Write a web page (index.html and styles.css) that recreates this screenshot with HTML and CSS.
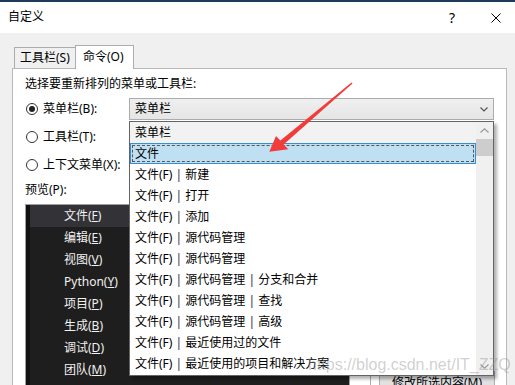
FILE: index.html
```html
<!DOCTYPE html>
<html lang="zh-CN">
<head>
  <meta charset="UTF-8">
  <title>自定义</title>
  <link rel="stylesheet" href="styles.css">
</head>
<body>

  <div class="dialog">

    <div class="titlebar">
      <span class="title">自定义</span>
      <span class="help">?</span>
      <svg class="close" width="10" height="10" viewBox="0 0 10 10">
        <path d="M0.5 0.5 L9.5 9.5 M9.5 0.5 L0.5 9.5" stroke="#000" stroke-width="1" fill="none"/>
      </svg>
    </div>

    <div class="client">
      <div class="tabs">
        <div class="tab">工具栏(S)</div>
        <div class="tab active">命令(O)</div>
      </div>

      <div class="panel">
        <div class="intro">选择要重新排列的菜单或工具栏:</div>

        <div class="choices">
          <label class="radio checked"><span class="circle"></span>菜单栏(B):</label>
          <div class="combo">
            <span>菜单栏</span>
            <svg width="8" height="5" viewBox="0 0 8 5">
              <path d="M0.5 0.5 L4 4 L7.5 0.5" stroke="#555" stroke-width="1.2" fill="none"/>
            </svg>
          </div>
          <label class="radio"><span class="circle"></span>工具栏(T):</label>
          <label class="radio"><span class="circle"></span>上下文菜单(X):</label>
        </div>

        <div class="preview-label">预览(P):</div>

        <div class="preview-row">
          <div class="preview">
            <div class="menu">
              <div class="menu-item active">文件(<u>F</u>)</div>
              <div class="menu-item">编辑(<u>E</u>)</div>
              <div class="menu-item">视图(<u>V</u>)</div>
              <div class="menu-item">Python(<u>Y</u>)</div>
              <div class="menu-item">项目(<u>P</u>)</div>
              <div class="menu-item">生成(<u>B</u>)</div>
              <div class="menu-item">调试(<u>D</u>)</div>
              <div class="menu-item">团队(<u>M</u>)</div>
            </div>
          </div>
          <div class="side">
            <div class="btn-frame">
              <div class="btn">修改所选内容(M)</div>
            </div>
          </div>
        </div>

        <!-- 打开的下拉列表 -->
        <div class="dropdown">
          <div class="items">
            <div class="item first">菜单栏</div>
            <div class="item selected">文件</div>
            <div class="item">文件(F) <span class="sep">|</span> 新建</div>
            <div class="item">文件(F) <span class="sep">|</span> 打开</div>
            <div class="item">文件(F) <span class="sep">|</span> 添加</div>
            <div class="item">文件(F) <span class="sep">|</span> 源代码管理</div>
            <div class="item">文件(F) <span class="sep">|</span> 源代码管理</div>
            <div class="item">文件(F) <span class="sep">|</span> 源代码管理 <span class="sep">|</span> 分支和合并</div>
            <div class="item">文件(F) <span class="sep">|</span> 源代码管理 <span class="sep">|</span> 查找</div>
            <div class="item">文件(F) <span class="sep">|</span> 源代码管理 <span class="sep">|</span> 高级</div>
            <div class="item">文件(F) <span class="sep">|</span> 最近使用过的文件</div>
            <div class="item">文件(F) <span class="sep">|</span> 最近使用的项目和解决方案</div>
          </div>
          <div class="scrollbar">
            <div class="scroll-btn">
              <svg width="9" height="5" viewBox="0 0 9 5">
                <path d="M0.5 4.5 L4.5 0.8 L8.5 4.5" stroke="#9a9a9a" stroke-width="1.2" fill="none"/>
              </svg>
            </div>
            <div class="thumb"></div>
            <div class="track"></div>
            <div class="scroll-btn">
              <svg width="9" height="5" viewBox="0 0 9 5">
                <path d="M0.5 0.5 L4.5 4.2 L8.5 0.5" stroke="#9a9a9a" stroke-width="1.2" fill="none"/>
              </svg>
            </div>
          </div>
        </div>
      </div>
    </div>

    <div class="watermark">https://blog.csdn.net/IT_ZZQ</div>

    <svg class="arrow" width="515" height="385" viewBox="0 0 515 385">
      <polygon points="269.3,151.7 276,136 280.4,140.6 351.5,82.4 352.5,83.6 283.6,144.4 288.3,149.3" fill="#f23c3c"/>
    </svg>

  </div>

</body>
</html>
```

FILE: styles.css
```css
* {
  box-sizing: border-box;
}

html, body {
  margin: 0;
  padding: 0;
}

body {
  font-family: "Noto Sans", "Noto Sans CJK SC", sans-serif;
  font-size: 12px;
  color: #000;
  background-color: #f0f0f0;
}

.dialog {
  position: relative;
  width: 515px;
  height: 385px;
  overflow: hidden;
  background-color: #f0f0f0;
}

/* 标题栏 */
.titlebar {
  height: 33px;
  border-top: 2px solid #1e3a5a;
  background-color: #fff;
  display: flex;
  align-items: center;
  padding: 0 14px 0 8px;
}

.title {
  flex: 1;
  line-height: 16px;
  margin-bottom: 2px;
}

.help {
  width: 8px;
  font-size: 14px;
  line-height: 16px;
  text-align: center;
  margin-right: 35px;
}

/* 选项卡 */
.client {
  padding: 12px 8px 0 12px;
}

.tabs {
  display: flex;
  align-items: flex-end;
  height: 24px;
  margin-left: 2px;
  margin-bottom: -1px;
  position: relative;
  z-index: 1;
}

.tab {
  height: 21px;
  width: 61px;
  margin-bottom: 1px;
  padding-left: 5px;
  line-height: 20px;
  border: 1px solid #adadad;
  border-right: none;
  border-bottom: none;
  background-color: #f0f0f0;
}

.tab.active {
  height: 24px;
  width: 59px;
  margin-bottom: 0;
  padding-left: 7px;
  line-height: 22px;
  border-right: 1px solid #adadad;
  background-color: #fff;
}

.panel {
  position: relative;
  height: 330px;
  padding: 7px 11px 0 12px;
  border: 1px solid #b9b9b9;
  background-color: #fff;
}

.intro {
  line-height: 16px;
}

.choices {
  margin-top: 6px;
  display: grid;
  grid-template-columns: 104px 365px;
  grid-auto-rows: 22px;
  row-gap: 6px;
}

.radio {
  grid-column: 1;
  display: flex;
  align-items: center;
  gap: 5px;
  line-height: 22px;
  white-space: nowrap;
}

.circle {
  width: 12px;
  height: 12px;
  margin-left: 1px;
  border: 1px solid #333;
  border-radius: 50%;
  display: grid;
  place-items: center;
}

.radio.checked .circle::after {
  content: "";
  width: 6px;
  height: 6px;
  border-radius: 50%;
  background-color: #222;
}

.combo {
  grid-column: 2;
  display: flex;
  align-items: center;
  justify-content: space-between;
  padding: 0 5px 0 5px;
  border: 1px solid #acacac;
  background: linear-gradient(#efefef, #e5e5e5);
  line-height: 20px;
}

.preview-label {
  margin-top: 6px;
  line-height: 16px;
}

.preview-row {
  display: flex;
  margin-top: 6px;
}

.preview {
  width: 325px;
  height: 190px;
  border: 1px solid #a0a0a0;
  background-color: #111;
  padding-left: 4px;
}

.menu {
  height: 100%;
  background-color: #1e1e1e;
}

.menu-item {
  height: 22px;
  line-height: 22px;
  padding-left: 34px;
  color: #f1f1f1;
}

.menu-item.active {
  background-color: #333337;
}

.side {
  margin-left: 20px;
  padding-top: 167px;
}

.btn-frame {
  border-left: 1px solid #adadad;
  padding-left: 8px;
}

.btn {
  height: 23px;
  line-height: 21px;
  padding: 0 12px;
  border: 1px solid #adadad;
  background-color: #e1e1e1;
  white-space: nowrap;
}

/* 下拉列表 */
.dropdown {
  position: absolute;
  left: 116px;
  top: 52px;
  width: 365px;
  height: 255px;
  display: flex;
  border: 1px solid #646464;
  background-color: #fff;
  box-shadow: 3px 3px 3px rgba(0, 0, 0, 0.3);
  z-index: 2;
}

.items {
  flex: 1;
}

.item {
  height: 21px;
  line-height: 21px;
  padding-left: 5px;
  white-space: nowrap;
  overflow: hidden;
}

.item.first {
  background-color: #f2f2f2;
}

.item.selected {
  position: relative;
  padding-left: 4px;
  line-height: 19px;
  border: 1px solid #3a8fd0;
  background-color: #bfe0f3;
}

.item.selected::after {
  content: "";
  position: absolute;
  inset: 1px;
  border: 1px dashed #555;
}

.sep {
  color: #2a1f45;
}

.scrollbar {
  width: 17px;
  display: flex;
  flex-direction: column;
  background-color: #f0f0f0;
}

.scroll-btn {
  height: 17px;
  display: grid;
  place-items: center;
}

.thumb {
  height: 17px;
  background-color: #cdcdcd;
}

.track {
  flex: 1;
}

.watermark {
  position: absolute;
  left: 308px;
  top: 355px;
  font-family: "Liberation Sans", Arial, sans-serif;
  font-size: 16px;
  line-height: 20px;
  color: rgba(150, 150, 150, 0.45);
  white-space: nowrap;
  z-index: 3;
}

.arrow {
  position: absolute;
  left: 0;
  top: 0;
  pointer-events: none;
  z-index: 4;
}
```
